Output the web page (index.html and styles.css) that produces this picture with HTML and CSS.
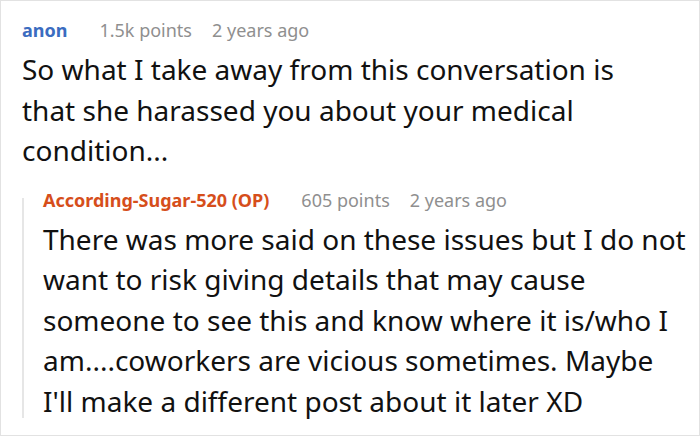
FILE: index.html
```html
<!DOCTYPE html>
<html>
<head>
<meta charset="utf-8">
<link rel="stylesheet" href="styles.css">
</head>
<body>
<div class="frame">
  <div class="comment">
    <div class="meta">
      <span class="user anon">anon</span>
      <span class="info points">1.5k points</span>
      <span class="info">2 years ago</span>
    </div>
    <p class="text main-text">So what I take away from this conversation is that she harassed you about your medical condition...</p>
    <div class="reply">
      <div class="rail"></div>
      <div class="reply-body">
        <div class="meta">
          <span class="user op">According-Sugar-520 (OP)</span>
          <span class="info points">605 points</span>
          <span class="info">2 years ago</span>
        </div>
        <p class="text reply-text">There was more said on these issues but I do not want to risk giving details that may cause someone to see this and know where it is/who I am....coworkers are vicious sometimes. Maybe I'll make a different post about it later XD</p>
      </div>
    </div>
  </div>
</div>
</body>
</html>
```

FILE: styles.css
```css
html, body {
  margin: 0;
  padding: 0;
  background: #fff;
}
.frame {
  width: 700px;
  height: 436px;
  box-sizing: border-box;
  border: 1px solid #e2e2e2;
  overflow: hidden;
  font-family: "Noto Sans", "Open Sans", sans-serif;
}
.comment {
  padding: 17px 0 0 21px;
}
.meta {
  display: flex;
  font-size: 18px;
  line-height: 24px;
  align-items: baseline;
}
.user {
  font-weight: 700;
  margin-right: 32px;
}
.anon { color: #3b6cc0; }
.op { color: #d64e1b; }
.info {
  color: #8f8f8f;
}
.points {
  margin-right: 20px;
}
.text {
  margin: 7px 0 0 0;
  font-size: 28px;
  line-height: 40.5px;
  color: #111;
}
.main-text {
  margin-right: 40px;
}
.reply {
  display: flex;
  margin-top: 17px;
}
.rail {
  flex: none;
  width: 2px;
  background: #e6e6e6;
  margin: 10px 19px 3px 0;
}
.reply-body {
  flex: 1;
  min-width: 0;
}
.reply-text {
  margin-top: 7px;
  margin-right: 9px;
}
```
